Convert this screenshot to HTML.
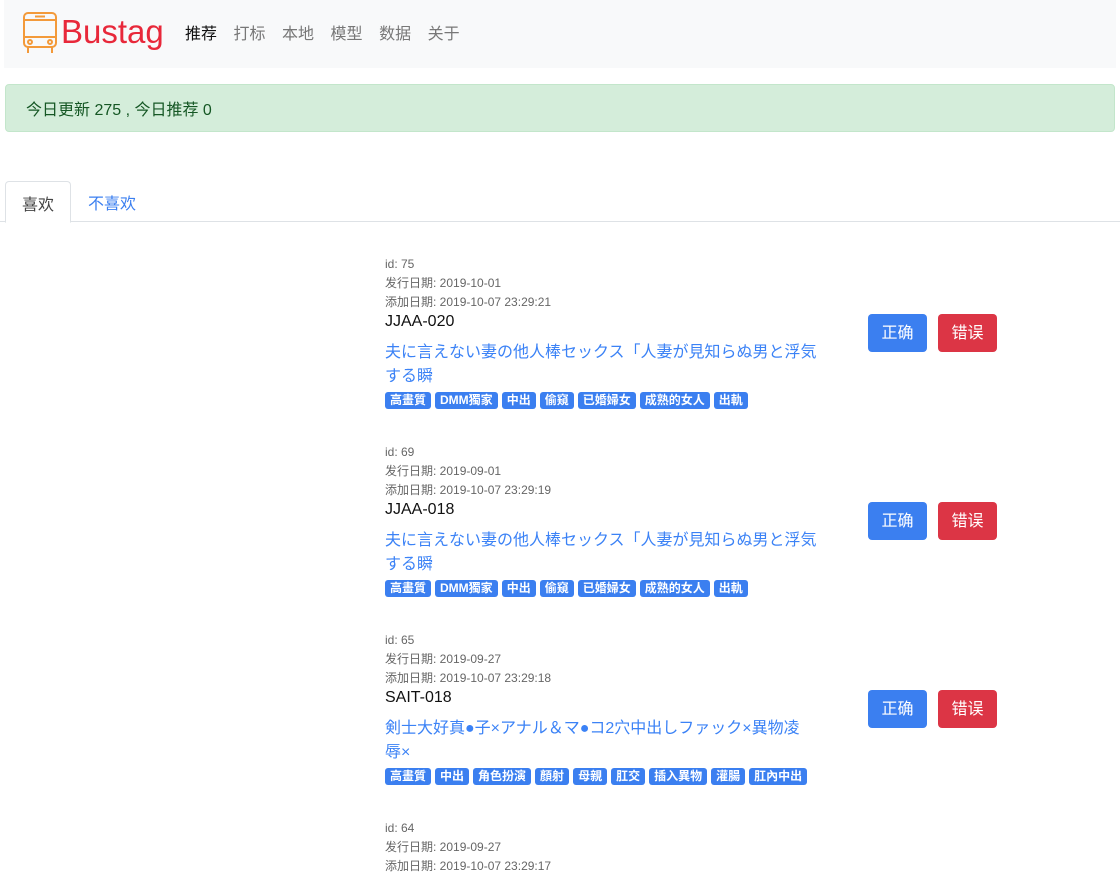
<!DOCTYPE html>
<html><head><meta charset="utf-8"><style>
*{box-sizing:border-box;margin:0;padding:0}
body{width:1120px;height:873px;overflow:hidden;background:#fff;font-family:"Liberation Sans","Noto Sans CJK SC",sans-serif;color:#212529;position:relative}
.nav{position:absolute;left:4px;top:0;width:1112px;height:68px;background:#f8f9fa}
.brand{position:absolute;left:57px;top:13px;font-family:"Comic Sans MS","Liberation Sans",cursive;font-size:33px;color:#e8283a}
.menu{position:absolute;left:181px;top:20px;font-size:16px;color:#777}
.menu span{margin-right:16.5px}
.menu .a{color:#111}
.alert{position:absolute;left:5px;top:84px;width:1110px;height:48px;background:#d4edda;border:1px solid #c3e6cb;border-radius:4px;color:#155724;font-size:16px;padding:11px 20px}
.tabs{position:absolute;left:0;top:221px;width:1120px;border-top:1px solid #dee2e6}
.tab1{position:absolute;left:5px;top:181px;width:66px;height:42px;border:1px solid #dee2e6;border-bottom:1px solid #fff;border-radius:4px 4px 0 0;background:#fff;font-size:16px;padding:9px 16px;color:#444}
.tab2{position:absolute;left:88px;top:190px;font-size:16px;color:#3b7ff0}
.item{position:absolute;left:385px;width:470px}
.meta{font-size:12px;color:#666;line-height:19px}
.code{font-size:16px;color:#111;line-height:19px}
.t{font-size:16px;color:#3b82f6;line-height:24px;margin-top:10px;white-space:nowrap}
.tags{margin-top:2px;height:17px;white-space:nowrap}
.tags span{display:inline-block;background:#3b7ff0;color:#fff;font-size:12px;font-weight:bold;padding:0 5px;border-radius:3px;line-height:17px;margin-right:4px}
.btn{position:absolute;width:59px;height:38px;border-radius:4px;color:#fff;font-size:16px;text-align:center;line-height:40px}
.ok{left:868px;background:#3b7ff0}
.no{left:938px;background:#dc3545}
</style></head><body>
<div class="nav">
<svg style="position:absolute;left:18px;top:11px" width="36" height="44" viewBox="0 0 36 44" fill="none" stroke="#f39a3a" stroke-width="2"><rect x="2" y="2" width="32" height="34" rx="4"/><line x1="2" y1="9" x2="34" y2="9"/><line x1="2" y1="26" x2="34" y2="26"/><line x1="13" y1="5.5" x2="23" y2="5.5"/><circle cx="8" cy="31" r="2"/><circle cx="28" cy="31" r="2"/><line x1="6" y1="36" x2="6" y2="42"/><line x1="30" y1="36" x2="30" y2="42"/></svg>
<div class="brand">Bustag</div>
<div class="menu"><span class="a">推荐</span><span>打标</span><span>本地</span><span>模型</span><span>数据</span><span>关于</span></div>
</div>
<div class="alert">今日更新 275 , 今日推荐 0</div>
<div class="tabs"></div>
<div class="tab1">喜欢</div>
<div class="tab2">不喜欢</div>

<div class="item" style="top:255px"><div class="meta">id: 75<br>发行日期: 2019-10-01<br>添加日期: 2019-10-07 23:29:21</div><div class="code">JJAA-020</div><div class="t">夫に言えない妻の他人棒セックス「人妻が見知らぬ男と浮気<br>する瞬</div><div class="tags"><span>高畫質</span><span>DMM獨家</span><span>中出</span><span>偷窺</span><span>已婚婦女</span><span>成熟的女人</span><span>出軌</span></div></div>
<div class="btn ok" style="top:314px">正确</div><div class="btn no" style="top:314px">错误</div>

<div class="item" style="top:443px"><div class="meta">id: 69<br>发行日期: 2019-09-01<br>添加日期: 2019-10-07 23:29:19</div><div class="code">JJAA-018</div><div class="t">夫に言えない妻の他人棒セックス「人妻が見知らぬ男と浮気<br>する瞬</div><div class="tags"><span>高畫質</span><span>DMM獨家</span><span>中出</span><span>偷窺</span><span>已婚婦女</span><span>成熟的女人</span><span>出軌</span></div></div>
<div class="btn ok" style="top:502px">正确</div><div class="btn no" style="top:502px">错误</div>

<div class="item" style="top:631px"><div class="meta">id: 65<br>发行日期: 2019-09-27<br>添加日期: 2019-10-07 23:29:18</div><div class="code">SAIT-018</div><div class="t">剣士大好真●子×アナル＆マ●コ2穴中出しファック×異物凌<br>辱×</div><div class="tags"><span>高畫質</span><span>中出</span><span>角色扮演</span><span>顏射</span><span>母親</span><span>肛交</span><span>插入異物</span><span>灌腸</span><span>肛內中出</span></div></div>
<div class="btn ok" style="top:690px">正确</div><div class="btn no" style="top:690px">错误</div>

<div class="item" style="top:819px"><div class="meta">id: 64<br>发行日期: 2019-09-27<br>添加日期: 2019-10-07 23:29:17</div></div>
</body></html>
